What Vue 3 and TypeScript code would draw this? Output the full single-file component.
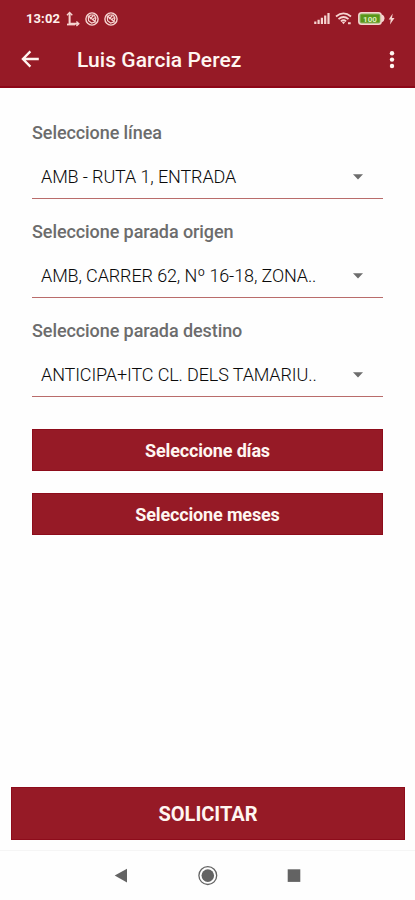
<script setup lang="ts">
interface Field {
  id: string
  label: string
  value: string
}

const fields: Field[] = [
  { id: 'linea', label: 'Seleccione línea', value: 'AMB - RUTA 1, ENTRADA' },
  { id: 'origen', label: 'Seleccione parada origen', value: 'AMB, CARRER 62, Nº 16-18, ZONA..' },
  { id: 'destino', label: 'Seleccione parada destino', value: 'ANTICIPA+ITC CL. DELS TAMARIU..' },
]

const pickers: string[] = ['Seleccione días', 'Seleccione meses']
</script>

<template>
  <div class="screen">
    <header class="header">
      <div class="status">
        <span class="time">13:02</span>
        <svg class="route" width="14" height="16" viewBox="0 0 14 16">
          <path d="M3.6 2v10.8H12" fill="none" stroke="currentColor" stroke-width="2" />
          <path d="M1 4.2 3.6 1.6l2.7 2.6M10.4 10.4l2.4 2.4-2.4 2.2" fill="none" stroke="currentColor" stroke-width="1.4" />
          <path d="M1 13.5h8" stroke="currentColor" stroke-width="1.8" />
        </svg>
        <svg v-for="n in 2" :key="n" class="badge" width="14" height="14" viewBox="0 0 14 14">
          <circle cx="7" cy="7" r="6.1" fill="none" stroke="currentColor" stroke-width="1.4" />
          <path d="M3.3 5.1 5.5 3h3.7l1.7 3-1.1 4-3.2 1.1-3-2.3zM3 3.8l8 6.5M8.4 3.5 5 7.2M9.8 5.6 7.2 8.2" fill="none" stroke="currentColor" stroke-width="1.2" />
        </svg>
        <span class="spacer"></span>
        <svg class="signal" width="16" height="13" viewBox="0 0 16 13">
          <path d="M1.3 9.5V12M4.6 7.8V12M7.9 5.8V12M11.2 3.5V12M14.5 1V12" stroke="currentColor" stroke-width="2.2" />
        </svg>
        <svg class="wifi" width="18" height="13" viewBox="0 0 18 13">
          <path d="M1 4.5Q8.5-1.7 16 4.5M3.5 7.1Q8.5 2.8 13.5 7.1M5.9 9.4Q8.5 7.2 11.1 9.4" fill="none" stroke="currentColor" stroke-width="1.8" />
          <path d="m6.9 10.3 1.6 1.9 1.6-1.9Q8.5 9.1 6.9 10.3zM13 10.2h2.7v2H13z" fill="currentColor" />
        </svg>
        <svg class="battery" width="27" height="13" viewBox="0 0 27 13">
          <rect x="0.8" y="0.8" width="22.4" height="11.4" rx="2.8" fill="#96b767" stroke="currentColor" stroke-width="1.5" />
          <path d="M23.7 2.6q2.8 1 2.8 3.9t-2.8 3.9z" fill="currentColor" />
          <rect x="2.6" y="2.6" width="19" height="7.8" rx="1" fill="#5a961a" />
          <text class="charge" x="12" y="9.6" text-anchor="middle">100</text>
        </svg>
        <svg class="bolt" width="7" height="12" viewBox="0 0 7 12">
          <path d="M4.7.5.7 6.5h2L2 11.5l4.5-6.4H4z" fill="currentColor" />
        </svg>
      </div>
      <div class="appbar">
        <svg class="back" width="18" height="18" viewBox="0 0 18 18">
          <path d="M9.4 1.4 1.9 9l7.5 7.6M2.2 9h15.6" fill="none" stroke="currentColor" stroke-width="2.3" />
        </svg>
        <h1 class="title">Luis Garcia Perez</h1>
        <svg class="more" width="6" height="18" viewBox="0 0 6 18">
          <circle cx="3" cy="2.3" r="2.2" fill="currentColor" />
          <circle cx="3" cy="8.6" r="2.2" fill="currentColor" />
          <circle cx="3" cy="15" r="2.2" fill="currentColor" />
        </svg>
      </div>
    </header>

    <main class="form">
      <div v-for="field in fields" :key="field.id" class="field">
        <div class="label">{{ field.label }}</div>
        <div class="select">
          <span class="value">{{ field.value }}</span>
          <svg class="caret" width="10" height="6" viewBox="0 0 10 6">
            <path d="M0 .3h10L5 5.5z" fill="currentColor" />
          </svg>
        </div>
      </div>
      <button v-for="picker in pickers" :key="picker" class="picker" type="button">{{ picker }}</button>
    </main>

    <button class="submit" type="button">SOLICITAR</button>

    <nav class="nav">
      <svg width="14" height="16" viewBox="0 0 14 16"><path d="M.7 7.6 13 .8v13.8z" fill="currentColor" /></svg>
      <svg width="20" height="20" viewBox="0 0 20 20">
        <circle cx="9.8" cy="9.6" r="8.9" fill="none" stroke="currentColor" stroke-width="1.3" />
        <circle cx="9.8" cy="9.6" r="6.3" fill="currentColor" />
      </svg>
      <svg width="14" height="14" viewBox="0 0 14 14"><path d="M.7.3h12.6v12.6H.7z" fill="currentColor" /></svg>
    </nav>
  </div>
</template>

<style>
body {
  background: #fefefe;
}
</style>

<style scoped>
.screen {
  display: flex;
  flex-direction: column;
  width: 415px;
  height: 900px;
  background: #fefefe;
  font-family: Roboto, "Liberation Sans", sans-serif;
  overflow: hidden;
}
svg {
  display: block;
  flex: none;
}
.header {
  box-sizing: border-box;
  height: 88px;
  flex: none;
  background: #961a26;
  border-bottom: 2px solid #8d0718;
  color: #fff6f1;
}
.status {
  display: flex;
  align-items: center;
  height: 37px;
  padding: 0 20px 0 26px;
  color: #f6d4d0;
}
.time {
  width: 40px;
  font-size: 13px;
  font-weight: 700;
  letter-spacing: 0.1px;
  color: #fff0ec;
}
.badge {
  margin-left: 5px;
}
.spacer {
  flex: 1;
}
.wifi {
  margin-left: 5px;
}
.battery {
  margin-left: 5px;
}
.bolt {
  margin-left: 3px;
}
.charge {
  font-size: 8px;
  font-weight: 700;
  fill: #dcefbd;
}
.appbar {
  display: flex;
  align-items: center;
  height: 45px;
  padding: 0 20px 0 21px;
}
.back {
  margin-top: -1px;
}
.title {
  flex: 1;
  margin: 1px 0 0 38px;
  font-size: 21px;
  line-height: 26px;
  font-weight: 500;
  letter-spacing: 0.06px;
}
.form {
  display: flex;
  flex-direction: column;
  padding: 34px 32px 0;
}
.field {
  height: 99.2px;
}
.label {
  height: 22px;
  font-size: 18px;
  line-height: 22px;
  font-weight: 500;
  letter-spacing: -0.08px;
  color: #6c6c6c;
}
.select {
  box-sizing: border-box;
  display: flex;
  align-items: center;
  justify-content: space-between;
  height: 55px;
  padding: 12px 20px 0 9px;
  border-bottom: 1px solid #b96c6b;
}
.value {
  font-size: 18px;
  line-height: 24px;
  font-weight: 300;
  letter-spacing: -0.12px;
  white-space: nowrap;
  color: #0a0a0a;
}
.caret {
  color: #6d6d6d;
}
.picker,
.submit {
  border: 1px solid #8d0c1b;
  background: #961a26;
  color: #fff6f1;
  font-family: inherit;
  font-weight: 700;
  padding: 0;
}
.picker {
  height: 42px;
  margin: 9.9px 0 0;
  padding-top: 1px;
  font-size: 18px;
  letter-spacing: -0.15px;
}
.picker + .picker {
  margin-top: 21.2px;
}
.submit {
  height: 53px;
  margin: auto 10px 10px 11px;
  font-size: 20px;
}
.nav {
  box-sizing: border-box;
  display: flex;
  align-items: center;
  justify-content: space-between;
  height: 50px;
  padding: 0 114px;
  border-top: 1px solid #f5f5f5;
  color: #636363;
}
</style>
